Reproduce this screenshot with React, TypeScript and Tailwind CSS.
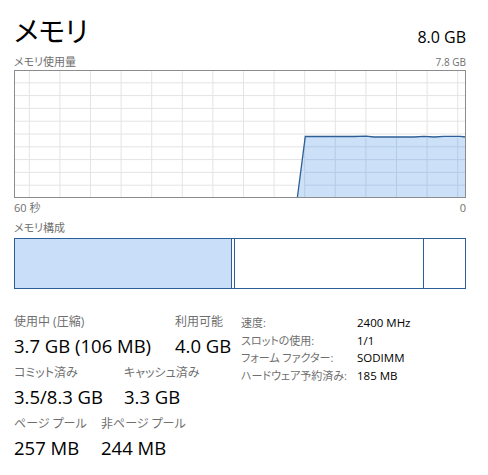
const FONT = "font-['Open_Sans','Noto_Sans_CJK_JP',sans-serif] [font-feature-settings:'palt']";

const W = 452;
const H = 128;

// grid offsets inside the chart box
const vLines = Array.from({ length: 15 }, (_, i) => 15.3 + i * 30.6);
const hLines = Array.from({ length: 9 }, (_, i) => (i + 1) * 12.8);

// usage samples: x, y (chart coordinates)
const samples: [number, number][] = [
  [283.3, H],
  [291.3, 66.5],
  [340, 66.5],
  [352, 66.2],
  [360, 67],
  [400, 67],
  [410, 66.3],
  [420, 67],
  [430, 66.3],
  [446, 66.3],
  [W, 67],
];

function UsageChart() {
  const line = samples.map(([x, y]) => `${x},${y}`).join(' ');
  const area = `${line} ${W},${H}`;
  return (
    <svg width={W} height={H} className="block" viewBox={`0 0 ${W} ${H}`}>
      <rect x={0} y={0} width={W} height={H} fill="#ffffff" />
      {vLines.map((x) => (
        <line key={`v${x}`} x1={x} y1={0} x2={x} y2={H} stroke="#e4e4e4" strokeWidth={1} />
      ))}
      {hLines.map((y) => (
        <line key={`h${y}`} x1={0} y1={y} x2={W} y2={y} stroke="#e4e4e4" strokeWidth={1} />
      ))}
      <polygon points={area} fill="#c9def8" fillOpacity={0.95} />
      {vLines
        .filter((x) => x > 290)
        .map((x) => (
          <line key={`o${x}`} x1={x} y1={68} x2={x} y2={H} stroke="#b4cbe6" strokeWidth={1} />
        ))}
      {hLines
        .filter((y) => y > 68)
        .map((y) => (
          <line key={`p${y}`} x1={291} y1={y} x2={W} y2={y} stroke="#b4cbe6" strokeWidth={1} />
        ))}
      <polyline points={line} fill="none" stroke="#2c5f95" strokeWidth={1.3} />
      <rect x={0.5} y={0.5} width={W - 1} height={H - 1} fill="none" stroke="#8c8c8c" strokeWidth={1} />
    </svg>
  );
}

function Stat({ label, value, className = '' }: { label: string; value: string; className?: string }) {
  return (
    <div className={`flex flex-col shrink-0 ${className}`}>
      <div className="h-[16px] text-[12px] leading-[16px] text-[#6f6f6f] whitespace-nowrap">{label}</div>
      <div className="mt-[4px] h-[24px] text-[18.5px] leading-[24px] text-black whitespace-nowrap">{value}</div>
    </div>
  );
}

const details: [string, string][] = [
  ['速度:', '2400 MHz'],
  ['スロットの使用:', '1/1'],
  ['フォーム ファクター:', 'SODIMM'],
  ['ハードウェア予約済み:', '185 MB'],
];

export default function App() {
  return (
    <div className={`w-[488px] h-[475px] bg-white pl-[14px] pr-[22px] overflow-hidden ${FONT}`}>
      <div className="flex justify-between h-[54px]">
        <div className="mt-[17px] text-[28px] leading-[28px] text-black">メモリ</div>
        <div className="mt-[29px] text-[16px] leading-[16px] text-black">8.0 GB</div>
      </div>
      <div className="flex justify-between items-center h-[16px] text-[#6f6f6f]">
        <span className="text-[11px] leading-[16px]">メモリ使用量</span>
        <span className="text-[10px] leading-[16px]">7.8 GB</span>
      </div>
      <UsageChart />
      <div className="flex justify-between h-[20px] text-[11px] leading-[20px] text-[#6f6f6f]">
        <span>60 秒</span>
        <span>0</span>
      </div>
      <div className="h-[20px] text-[11px] leading-[20px] text-[#6f6f6f]">メモリ構成</div>
      <div className="flex w-[452px] h-[51px] border border-[#2c5f95]">
        <div className="w-[217px] bg-[#c9def8] border-r border-[#2c5f95]" />
        <div className="w-[3px] border-r border-[#2c5f95]" />
        <div className="w-[189px] border-r border-[#2c5f95]" />
        <div className="flex-1" />
      </div>
      <div className="flex mt-[25px]">
        <div className="w-[227px] flex flex-col gap-[7px]">
          <div className="flex">
            <Stat label="使用中 (圧縮)" value="3.7 GB (106 MB)" className="w-[161px]" />
            <Stat label="利用可能" value="4.0 GB" />
          </div>
          <div className="flex">
            <Stat label="コミット済み" value="3.5/8.3 GB" className="w-[110px]" />
            <Stat label="キャッシュ済み" value="3.3 GB" />
          </div>
          <div className="flex">
            <Stat label="ページ プール" value="257 MB" className="w-[87px]" />
            <Stat label="非ページ プール" value="244 MB" />
          </div>
        </div>
        <div className="grid grid-cols-[116px_auto] auto-rows-[17.7px] text-[12px] leading-[17.7px]">
          {details.map(([k, v]) => (
            <div key={k} className="contents">
              <span className="text-[11px] text-[#6f6f6f] whitespace-nowrap">{k}</span>
              <span className="text-[11.5px] text-black whitespace-nowrap">{v}</span>
            </div>
          ))}
        </div>
      </div>
    </div>
  );
}
